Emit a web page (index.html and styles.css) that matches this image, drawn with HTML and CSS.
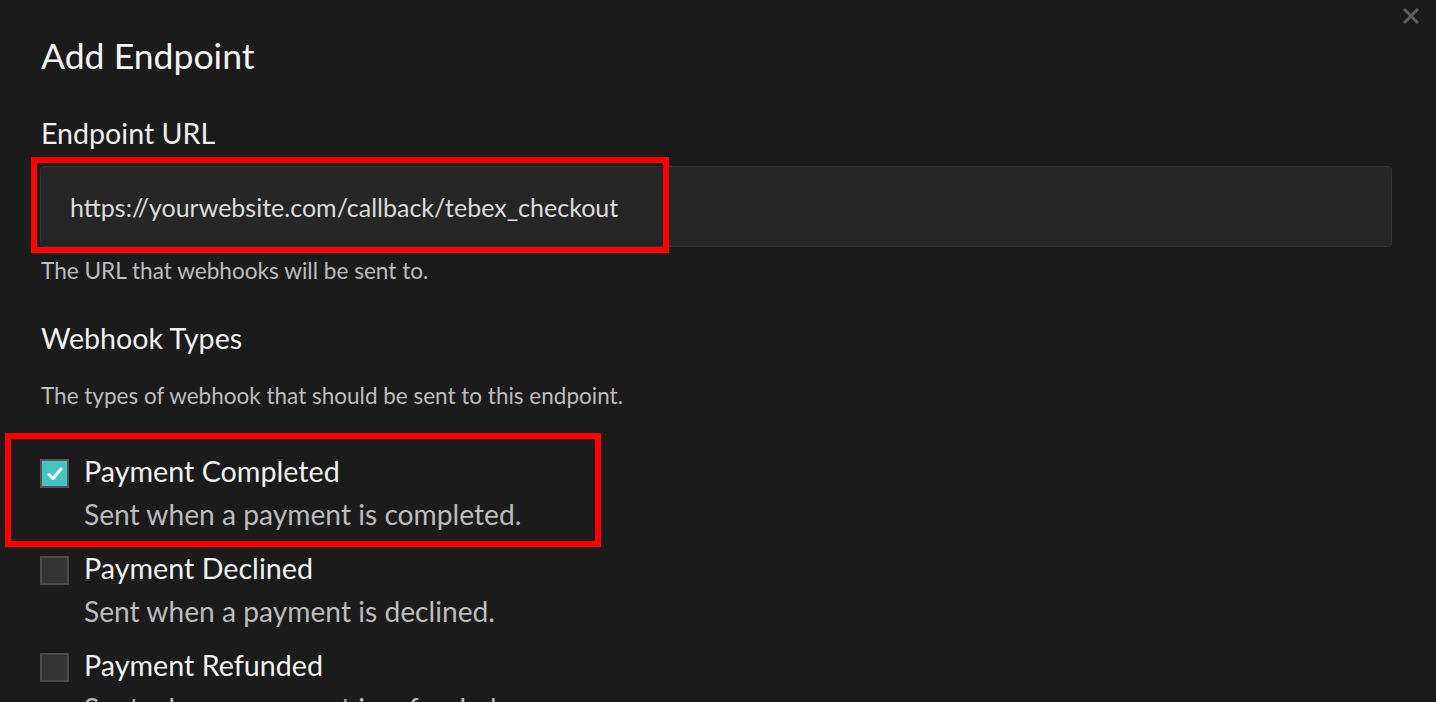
FILE: index.html
```html
<!DOCTYPE html>
<html lang="en">
<head>
<meta charset="utf-8">
<title>Add Endpoint</title>
<link rel="stylesheet" href="styles.css">
</head>
<body>
<div class="modal">
  <button class="close" aria-label="Close">
    <svg width="16" height="16" viewBox="0 0 16 16"><path d="M2 2L14 14M14 2L2 14" stroke="#5c5c5c" stroke-width="3" stroke-linecap="square"/></svg>
  </button>
  <h1 class="title">Add Endpoint</h1>

  <h2 class="label">Endpoint URL</h2>
  <div class="field">
    <div class="input">https://yourwebsite.com/callback/tebex_checkout</div>
    <div class="highlight highlight-url"></div>
  </div>
  <p class="help">The URL that webhooks will be sent to.</p>

  <h2 class="label label-types">Webhook Types</h2>
  <p class="help help-types">The types of webhook that should be sent to this endpoint.</p>

  <div class="types">
    <div class="type">
      <span class="check checked">
        <svg width="20" height="20" viewBox="0 0 20 20"><path d="M4 10.5L8 14.5L16 5" fill="none" stroke="#fff" stroke-width="3" stroke-linecap="round" stroke-linejoin="round"/></svg>
      </span>
      <div class="type-text">
        <div class="type-name">Payment Completed</div>
        <div class="type-desc">Sent when a payment is completed.</div>
      </div>
      <div class="highlight highlight-type"></div>
    </div>
    <div class="type">
      <span class="check"></span>
      <div class="type-text">
        <div class="type-name">Payment Declined</div>
        <div class="type-desc">Sent when a payment is declined.</div>
      </div>
    </div>
    <div class="type">
      <span class="check"></span>
      <div class="type-text">
        <div class="type-name">Payment Refunded</div>
        <div class="type-desc">Sent when a payment is refunded.</div>
      </div>
    </div>
  </div>
</div>
</body>
</html>
```

FILE: styles.css
```css
* { box-sizing: border-box; }

html, body {
  margin: 0;
  padding: 0;
  height: 100%;
  overflow: hidden;
  background: #1b1b1b;
}

body {
  font-family: Lato, "Open Sans", "Liberation Sans", sans-serif;
  color: #f2f2f2;
}

.modal {
  position: relative;
  padding: 33px 44px 0 41px;
}

.close {
  position: absolute;
  top: 8px;
  right: 17px;
  width: 16px;
  height: 16px;
  padding: 0;
  border: 0;
  background: none;
  display: block;
}
.close svg { display: block; }

.title {
  margin: 0;
  font-size: 35.6px;
  line-height: 46px;
  font-weight: 400;
  color: #f5f5f5;
}

.label {
  margin: 37px 0 0;
  font-size: 28.6px;
  line-height: 34px;
  font-weight: 400;
  color: #f0f0f0;
}

.label-types { margin-top: 36px; }

.field {
  position: relative;
  margin: 16px 0 0 -1px;
}

.input {
  height: 81px;
  border: 1px solid #333333;
  border-radius: 4px;
  background: #262626;
  padding: 0 0 0 29px;
  display: flex;
  align-items: center;
  font-size: 25px;
  color: #dcdcdc;
}

.highlight {
  position: absolute;
  border: 6px solid #ff0000;
  pointer-events: none;
}

.highlight-url {
  left: -9px;
  top: -9px;
  width: 638px;
  height: 96px;
}

.help {
  margin: 10px 0 0;
  font-size: 22.6px;
  line-height: 28px;
  color: #bdbdbd;
}

.help-types { margin-top: 27px; font-size: 22.5px; }

.types {
  margin-top: 40px;
  display: flex;
  flex-direction: column;
  gap: 11px;
}

.type {
  position: relative;
  display: flex;
  align-items: flex-start;
  gap: 15px;
}

.check {
  flex: none;
  width: 29px;
  height: 29px;
  margin-top: 9px;
  margin-left: -1px;
  border: 2px solid #4a4a4a;
  background: #333333;
  display: flex;
  align-items: center;
  justify-content: center;
}

.check.checked {
  background: #46c4c4;
  border-color: #555555;
}

.check svg { display: block; }

.type-text {
  font-size: 28.2px;
  line-height: 43px;
}

.type-name { color: #f2f2f2; font-size: 28.7px; }
.type-desc { color: #bcbcbc; }

.highlight-type {
  left: -36px;
  top: -17px;
  width: 596px;
  height: 114px;
}
```
